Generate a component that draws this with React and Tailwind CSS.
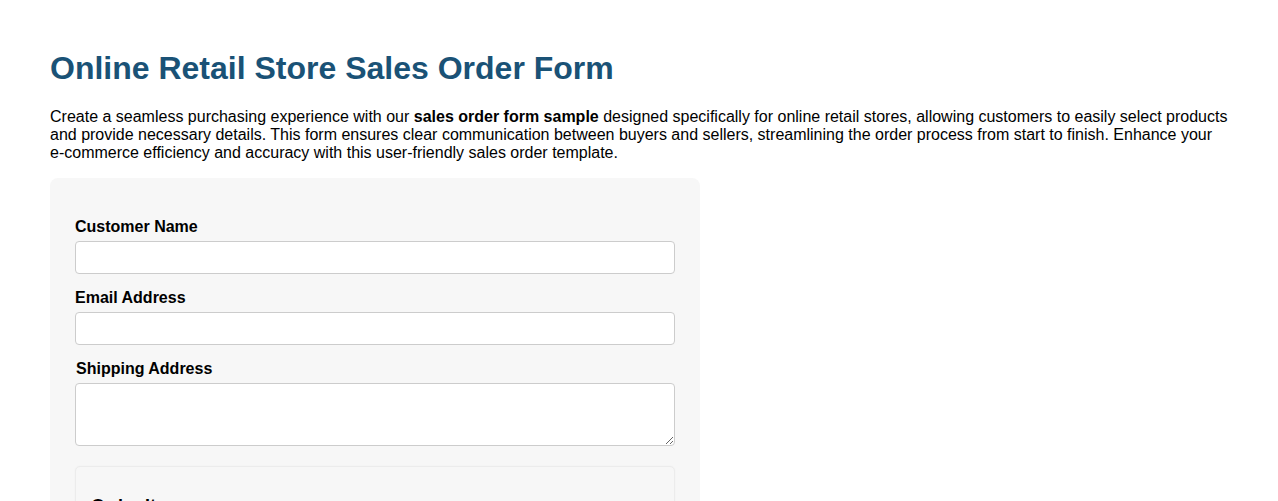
export default function App() {
  return (
    <div className="min-h-screen bg-white px-[50px] pt-[50px] font-['Liberation_Sans',Arial,sans-serif] text-black">
      <h1 className="text-[32px] font-bold leading-[37px] text-[#1a5276]">
        Online Retail Store Sales Order Form
      </h1>
      <p className="mt-[21px] text-[16px] leading-[18px]">
        Create a seamless purchasing experience with our <strong>sales order form sample</strong> designed specifically for
        online retail stores, allowing customers to easily select products and provide necessary details. This form ensures
        clear communication between buyers and sellers, streamlining the order process from start to finish. Enhance your
        e-commerce efficiency and accuracy with this user-friendly sales order template.
      </p>

      {/* formulario */}
      <form className="mt-[16px] w-[650px] rounded-lg bg-[#f7f7f7] px-[25px] pt-[40px] pb-6">
        <label className="block text-[16px] font-bold leading-[18px]">Customer Name</label>
        <input type="text" className="mt-[5px] block h-[33px] w-full rounded-[4px] border border-[#ccc] bg-white px-2" />

        <label className="mt-[15px] block text-[16px] font-bold leading-[18px]">Email Address</label>
        <input type="email" className="mt-[5px] block h-[33px] w-full rounded-[4px] border border-[#ccc] bg-white px-2" />

        <label className="mt-[15px] block pl-px text-[16px] font-bold leading-[18px]">Shipping Address</label>
        <textarea className="mt-[5px] block h-[63px] w-full rounded-[4px] border border-[#ccc] bg-white px-2" />

        <div className="mt-[20px] rounded-[5px] border border-[#ececec] bg-[#f7f7f7] px-[15px] pt-[29px] pb-6 shadow-[0_0_2px_rgba(0,0,0,0.04)]">
          <h3 className="text-[18px] font-bold leading-[21px]">Order Items</h3>
          <div className="mt-3 h-20" />
        </div>
      </form>
    </div>
  )
}
